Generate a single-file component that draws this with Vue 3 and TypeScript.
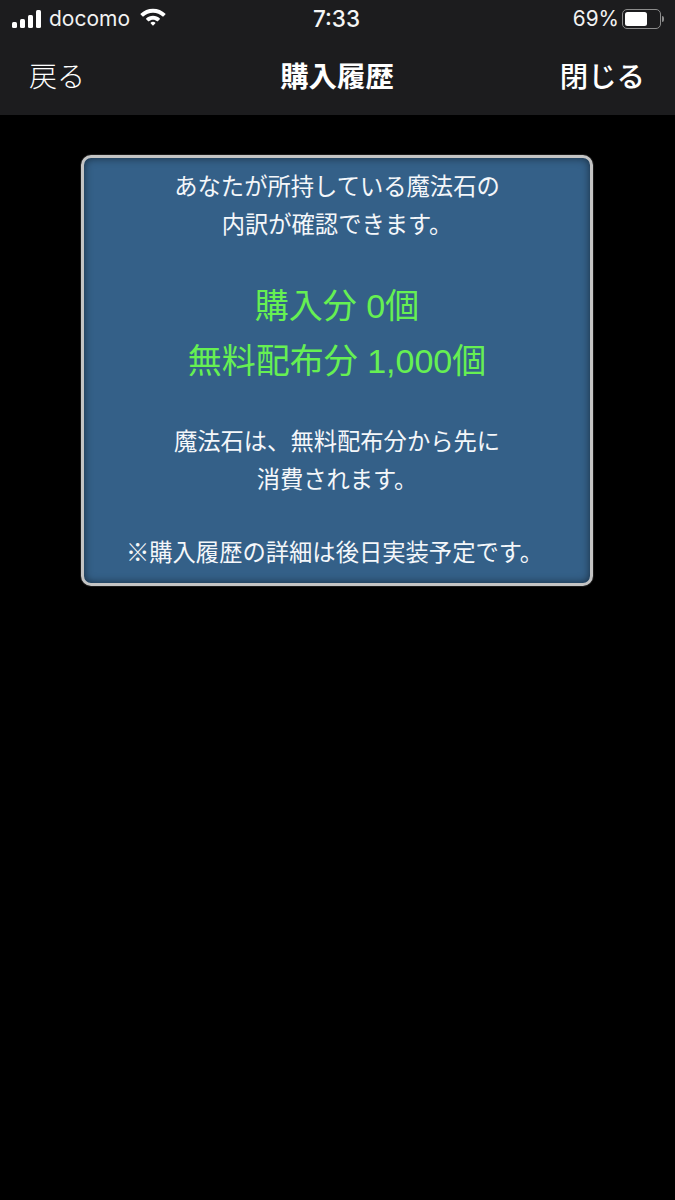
<script setup lang="ts">
const bars: number[] = [6, 9, 13, 18]
</script>

<template>
  <div class="screen">
    <header class="head">
      <div class="status">
        <div class="st-left">
          <span class="bars">
            <i v-for="(h, n) in bars" :key="n" class="bar" :style="{ height: h + 'px' }"></i>
          </span>
          <span class="carrier">docomo</span>
          <svg class="wifi" width="28" height="20" viewBox="0 0 27 19">
            <path fill="#fff" d="M13.5 1.6c4.7 0 8.9 1.8 12 4.800.3.2.1.5-.1.7l-1.900 2c-.2.2-.5.2-.7 0-2.400-2.300-5.700-3.700-9.300-3.700S6.600 6.800 4.200 9.100c-.2.2-.5.2-.7 0l-1.900-2c-.2-.2-.4-.5-.1-.7 3.100-3 7.300-4.800 12-4.800z"/>
            <path fill="#fff" d="M13.500 8.400c2.500 0 4.900 1 6.600 2.600.2.200.2.500 0 .700l-2 2c-.2.200-.5.200-.7 0-1-.900-2.400-1.500-3.900-1.500s-2.900.600-3.900 1.500c-.2.200-.5.200-.7 0l-2-2c-.2-.2-.2-.5 0-.7 1.700-1.600 4.100-2.600 6.600-2.600z"/>
            <path fill="#fff" d="M13.500 14.200c.9 0 1.700.300 2.300.900.100.100.100.300 0 .400l-2 2.200c-.2.200-.4.200-.6 0l-2-2.200c-.1-.1-.1-.3 0-.4.600-.6 1.400-.9 2.300-.9z"/>
          </svg>
        </div>
        <span class="time">7:33</span>
        <div class="st-right">
          <span class="pct">69%</span>
          <span class="battery"><span class="level"></span></span>
          <span class="nub"></span>
        </div>
      </div>
      <nav class="nav">
        <span class="back">戻る</span>
        <span class="title">購入履歴</span>
        <span class="close">閉じる</span>
      </nav>
    </header>

    <main class="content">
      <section class="card">
        <p class="line">あなたが所持している魔法石の</p>
        <p class="line">内訳が確認できます。</p>
        <div class="counts">
          <p class="count">購入分 0個</p>
          <p class="count">無料配布分 1,000個</p>
        </div>
        <div class="note">
          <p class="line">魔法石は、無料配布分から先に</p>
          <p class="line">消費されます。</p>
        </div>
        <p class="line foot">※購入履歴の詳細は後日実装予定です。</p>
      </section>
    </main>
  </div>
</template>

<style>
html, body { margin: 0; background: #000; }
</style>

<style scoped>
.screen {
  width: 675px;
  height: 1200px;
  background: #000;
  color: #fff;
  font-family: "Noto Sans CJK JP", "Liberation Sans", sans-serif;
  display: flex;
  flex-direction: column;
}
.head { height: 115px; background: #1c1c1e; display: flex; flex-direction: column; }
.status {
  height: 38px;
  padding: 0 11px 0 12px;
  display: grid;
  grid-template-columns: 1fr auto 1fr;
  align-items: center;
  font-family: Inter, "Liberation Sans", sans-serif;
}
.st-left { display: flex; align-items: center; }
.bars { display: flex; align-items: flex-end; gap: 3px; height: 18px; }
.bar { width: 5px; background: #fff; border-radius: 1.500px; display: block; }
.carrier { font-size: 21px; margin-left: 8px; color: #f2f2f2; }
.wifi { margin-left: 9px; margin-top: -3px; }
.time { font-size: 22.500px; font-weight: 500; color: #f5f5f5; margin-right: 3px; }
.st-right { display: flex; align-items: center; justify-content: flex-end; }
.pct { font-size: 20.800px; color: #f2f2f2; }
.battery {
  width: 39px;
  height: 20px;
  margin-left: 3px;
  box-sizing: border-box;
  border: 1.500px solid #8c8c8c;
  border-radius: 5px;
  padding: 2px;
  display: flex;
}
.level { width: 68%; background: #fff; border-radius: 2.500px; display: block; }
.nub { width: 2px; height: 6px; background: #8c8c8c; margin-left: 1px; border-radius: 0 2px 2px 0; }
.nav {
  height: 77px;
  padding: 0 30px 3px 29px;
  display: grid;
  grid-template-columns: 1fr auto 1fr;
  align-items: center;
  font-size: 28.400px;
}
.back { font-weight: 300; font-size: 28px; }
.title { font-weight: 700; }
.close { font-weight: 500; justify-self: end; }
.content {
  flex: 1;
  display: flex;
  justify-content: center;
  align-items: flex-start;
  padding: 40px 1px 0 0;
}
.card {
  width: 512px;
  height: 431px;
  box-sizing: border-box;
  border: 3px solid #c4c4c4;
  border-radius: 10px;
  background: #346088;
  box-shadow: inset 0 0 8px rgba(0, 0, 0, 0.55);
  text-align: center;
  padding-top: 8px;
  outline: 1px solid rgba(255, 255, 255, 0.1);
}
.line {
  margin: 0;
  font-size: 23.300px;
  line-height: 38px;
  color: #f4f7fa;
  font-weight: 400;
}
.counts { margin-top: 37px; }
.count {
  margin: 0;
  font-family: "Liberation Sans", "Noto Sans CJK JP", sans-serif;
  font-size: 34px;
  line-height: 55px;
  color: #66f052;
  font-weight: 400;
}
.note { margin-top: 32px; }
.foot { margin-top: 35px; padding-right: 5px; }
p { white-space: nowrap; }
</style>
